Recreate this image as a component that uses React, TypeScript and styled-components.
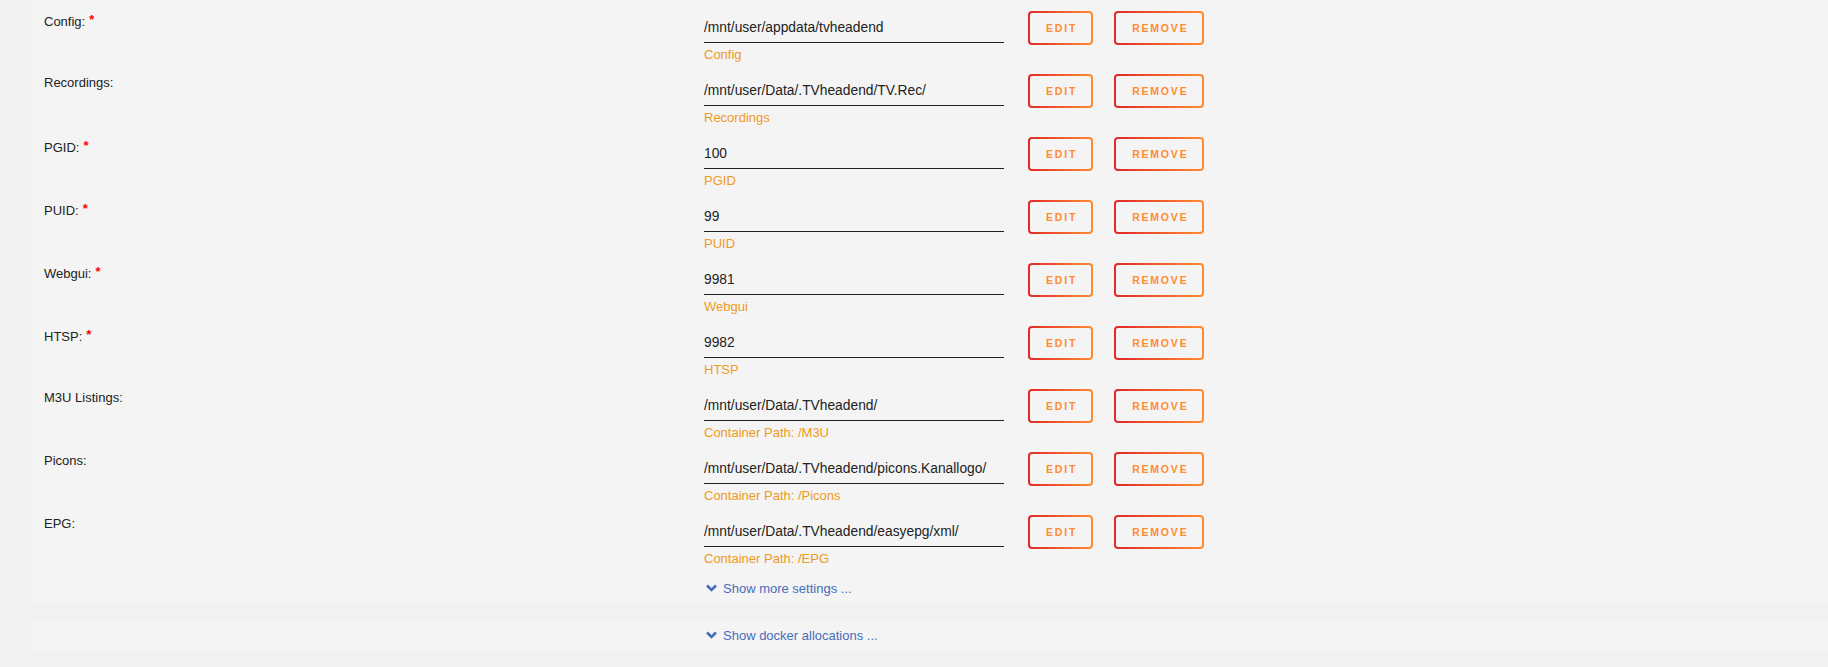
import React from 'react';
import styled, { createGlobalStyle } from 'styled-components';

interface PathRow {
  label: string;
  required?: boolean;
  value: string;
  hint: string;
}

const rows: PathRow[] = [
  { label: 'Config:', required: true, value: '/mnt/user/appdata/tvheadend', hint: 'Config' },
  { label: 'Recordings:', value: '/mnt/user/Data/.TVheadend/TV.Rec/', hint: 'Recordings' },
  { label: 'PGID:', required: true, value: '100', hint: 'PGID' },
  { label: 'PUID:', required: true, value: '99', hint: 'PUID' },
  { label: 'Webgui:', required: true, value: '9981', hint: 'Webgui' },
  { label: 'HTSP:', required: true, value: '9982', hint: 'HTSP' },
  { label: 'M3U Listings:', value: '/mnt/user/Data/.TVheadend/', hint: 'Container Path: /M3U' },
  { label: 'Picons:', value: '/mnt/user/Data/.TVheadend/picons.Kanallogo/', hint: 'Container Path: /Picons' },
  { label: 'EPG:', value: '/mnt/user/Data/.TVheadend/easyepg/xml/', hint: 'Container Path: /EPG' },
];

const GlobalStyle = createGlobalStyle`
  html, body {
    margin: 0;
    padding: 0;
    background: #f1f1f1;
    font-family: "Liberation Sans", Arial, sans-serif;
    color: #222;
  }
`;

const Page = styled.div`
  width: 1828px;
  height: 667px;
  overflow: hidden;
  background: #f1f1f1;
`;

const Panel = styled.div`
  margin-left: 32px;
  background: #f4f4f4;
  padding: 0 0 5px 12px;
`;

const TogglePanel = styled.div`
  margin: 19px 0 0 32px;
  background: #f4f4f4;
  padding: 5px 0 6px 672px;
`;

const Row = styled.div`
  display: grid;
  grid-template-columns: 660px 1fr;
  height: 63px;
`;

const FooterRow = styled.div`
  display: grid;
  grid-template-columns: 660px 1fr;
  padding-top: 12px;
`;

const Label = styled.div`
  padding-top: 11px;
  font-size: 13px;
  line-height: 18px;
  color: #222;
`;

const Required = styled.span`
  color: #f00;
  margin-left: 4px;
  font-size: 13px;
  font-weight: bold;
  vertical-align: 2px;
`;

const Controls = styled.div`
  display: flex;
  align-items: flex-start;
  padding-top: 11px;
`;

const Field = styled.div`
  width: 300px;
  display: flex;
  flex-direction: column;
`;

const Input = styled.div`
  padding-top: 3px;
  line-height: 28px;
  font-size: 13.8px;
  color: #222;
  border-bottom: 1px solid #222;
  white-space: nowrap;
`;

const Hint = styled.div`
  margin-top: 4px;
  font-size: 13px;
  line-height: 16px;
  color: #ef9a1c;
`;

const Buttons = styled.div`
  display: flex;
  gap: 21px;
  margin-left: 24px;
`;

const Button = styled.button`
  height: 34px;
  padding: 0 14px 0 16px;
  border: 2px solid transparent;
  border-radius: 4px;
  background:
    linear-gradient(#f4f4f4, #f4f4f4) padding-box,
    linear-gradient(to right, #e22828, #ff8c2f) border-box;
  color: #ff8c2f;
  font-family: "Liberation Sans", Arial, sans-serif;
  font-size: 10.5px;
  font-weight: bold;
  letter-spacing: 1.8px;
  text-transform: uppercase;
  cursor: pointer;
`;

const Toggle = styled.div`
  display: flex;
  align-items: center;
  gap: 6px;
  margin-left: 2px;
  height: 18px;
  font-size: 13px;
  color: #486dba;
  cursor: pointer;
`;

const Chevron = () => (
  <svg width="11" height="8" viewBox="0 0 11 8">
    <path d="M1 1.5 L5.5 6 L10 1.5" fill="none" stroke="#486dba" strokeWidth="2.6" />
  </svg>
);

const App: React.FC = () => {
  return (
    <Page>
      <GlobalStyle />
      <Panel>
        {rows.map((row) => (
          <Row key={row.label}>
            <Label>
              {row.label}
              {row.required && <Required>*</Required>}
            </Label>
            <Controls>
              <Field>
                <Input>{row.value}</Input>
                <Hint>{row.hint}</Hint>
              </Field>
              <Buttons>
                <Button>Edit</Button>
                <Button>Remove</Button>
              </Buttons>
            </Controls>
          </Row>
        ))}
        <FooterRow>
          <div />
          <Toggle>
            <Chevron />
            Show more settings ...
          </Toggle>
        </FooterRow>
      </Panel>
      <TogglePanel>
        <Toggle>
          <Chevron />
          Show docker allocations ...
        </Toggle>
      </TogglePanel>
    </Page>
  );
};

export default App;
